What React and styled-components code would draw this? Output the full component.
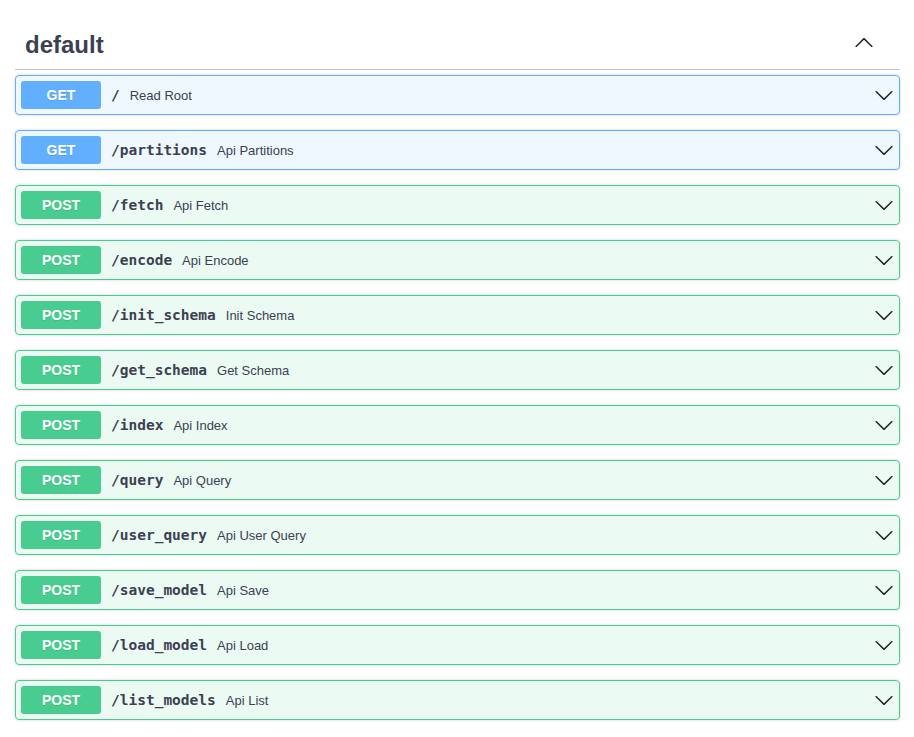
import React from "react";
import styled, { createGlobalStyle } from "styled-components";

const GlobalStyle = createGlobalStyle`
  body {
    margin: 0;
    background: #fff;
    font-family: "Liberation Sans", Arial, sans-serif;
  }
`;

const methods = {
  get: { color: "#61affe", bg: "rgba(97, 175, 254, 0.1)" },
  post: { color: "#49cc90", bg: "rgba(73, 204, 144, 0.1)" },
};

const ops = [
  { method: "get", path: "/", summary: "Read Root" },
  { method: "get", path: "/partitions", summary: "Api Partitions" },
  { method: "post", path: "/fetch", summary: "Api Fetch" },
  { method: "post", path: "/encode", summary: "Api Encode" },
  { method: "post", path: "/init_schema", summary: "Init Schema" },
  { method: "post", path: "/get_schema", summary: "Get Schema" },
  { method: "post", path: "/index", summary: "Api Index" },
  { method: "post", path: "/query", summary: "Api Query" },
  { method: "post", path: "/user_query", summary: "Api User Query" },
  { method: "post", path: "/save_model", summary: "Api Save" },
  { method: "post", path: "/load_model", summary: "Api Load" },
  { method: "post", path: "/list_models", summary: "Api List" },
];

const Page = styled.div`
  padding: 20px 14px 0 15px;
  width: 885px;
`;

const TagHeader = styled.div`
  display: flex;
  align-items: center;
  padding: 10px 20px 10px 10px;
  margin: 0 0 5px;
  border-bottom: 1px solid rgba(59, 65, 81, 0.3);
`;

const TagTitle = styled.h3`
  flex: 1;
  margin: 0;
  font-size: 24px;
  line-height: 29px;
  font-weight: 700;
  color: #3b4151;
`;

const ToggleButton = styled.button`
  border: none;
  background: none;
  padding: 0;
  margin: 0 6px 4px 0;
  display: flex;
  cursor: pointer;
`;

const Block = styled.div`
  display: flex;
  align-items: center;
  margin: 0 0 15px;
  padding: 5px;
  border: 1px solid ${(p) => methods[p.$method].color};
  background: ${(p) => methods[p.$method].bg};
  border-radius: 4px;
  box-shadow: 0 0 3px rgba(0, 0, 0, 0.19);
`;

const Badge = styled.span`
  min-width: 80px;
  padding: 6px 0;
  border-radius: 3px;
  background: ${(p) => methods[p.$method].color};
  color: #fff;
  font-size: 14px;
  font-weight: 700;
  line-height: 16px;
  text-align: center;
  text-transform: uppercase;
  text-shadow: 0 1px 0 rgba(0, 0, 0, 0.1);
`;

const Path = styled.span`
  padding: 0 10px;
  font-family: "DejaVu Sans Mono", "Liberation Mono", monospace;
  font-size: 14.5px;
  font-weight: 700;
  color: #3b4151;
`;

const Summary = styled.span`
  flex: 1;
  font-size: 13px;
  color: #3b4151;
`;

const Arrow = ({ up }) => (
  <svg
    width="20"
    height="20"
    viewBox="0 0 20 20"
    style={up ? { transform: "rotate(180deg)" } : undefined}
  >
    <path
      fill="#222"
      d="M17.418 6.109c.272-.268.709-.268.979 0s.271.701 0 .969l-7.908 7.83c-.27.268-.707.268-.979 0l-7.908-7.83c-.27-.268-.27-.701 0-.969.271-.268.709-.268.979 0L10 13.25l7.418-7.141z"
    />
  </svg>
);

export default function App() {
  return (
    <Page>
      <GlobalStyle />
      <TagHeader>
        <TagTitle>default</TagTitle>
        <ToggleButton aria-label="collapse">
          <Arrow up />
        </ToggleButton>
      </TagHeader>
      {ops.map((op) => (
        <Block key={op.path} $method={op.method}>
          <Badge $method={op.method}>{op.method}</Badge>
          <Path>{op.path}</Path>
          <Summary>{op.summary}</Summary>
          <Arrow />
        </Block>
      ))}
    </Page>
  );
}
